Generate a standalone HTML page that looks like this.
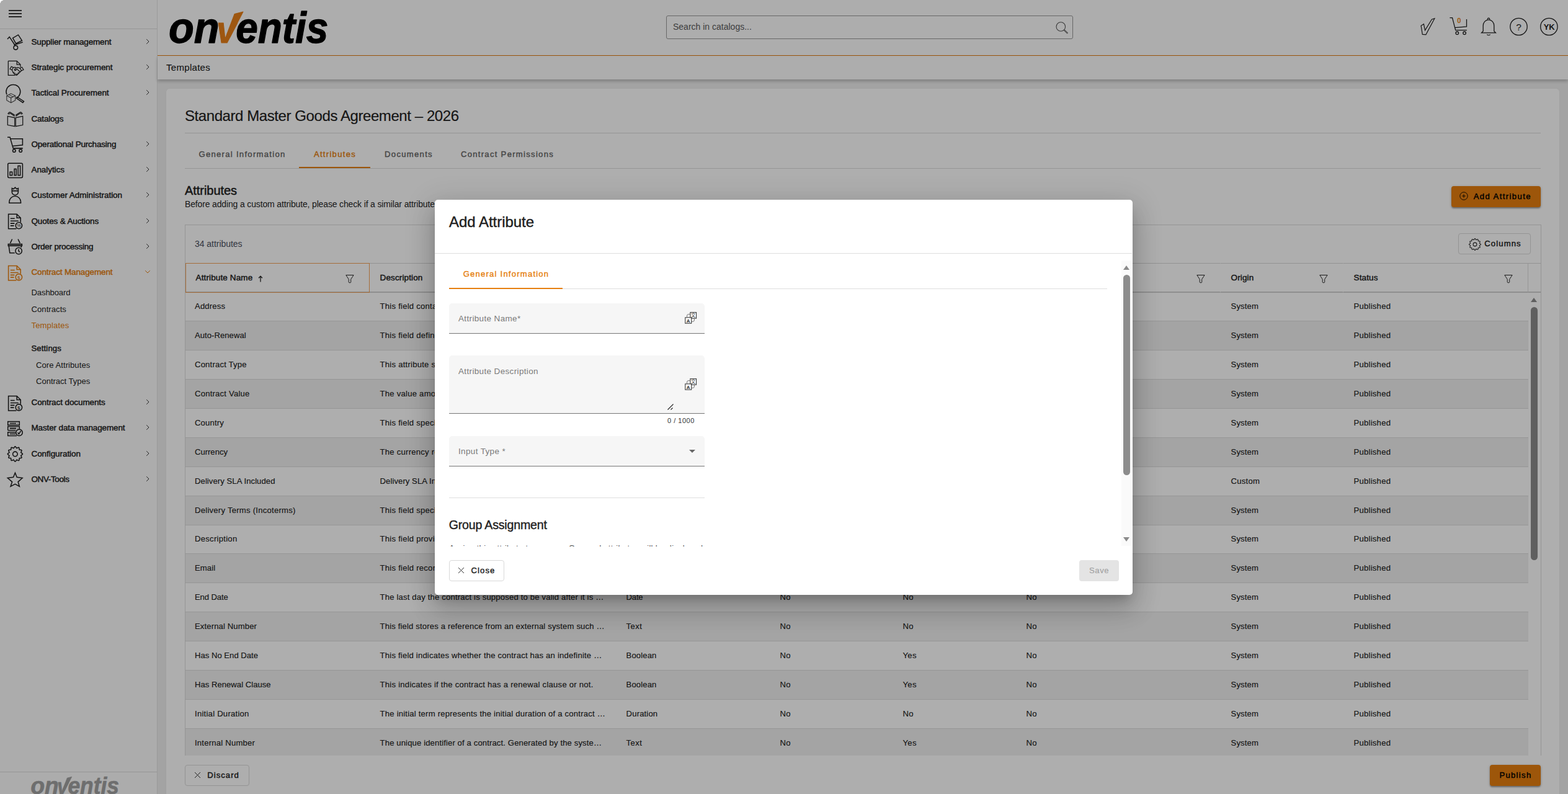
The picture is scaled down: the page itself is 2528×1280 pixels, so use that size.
<!DOCTYPE html><html lang="en"><head><meta charset="utf-8"><title>Templates</title><style>
*{box-sizing:border-box;margin:0;padding:0}
html,body{width:2528px;height:1280px;overflow:hidden}
body{font-family:"Liberation Sans",sans-serif;background:#efefef;color:#212121;position:relative;font-size:14px}
.abs{position:absolute}
.sb{position:absolute;left:0;top:0;width:254px;height:1280px;background:#fdfdfd;border-right:1px solid #e2e2e2}
.sb .top{position:absolute;left:0;top:0;width:253px;height:47px;border-bottom:1px solid #dcdcdc}
.sb .ham{position:absolute;left:14px;top:15.8px;width:21px;height:13px}
.sb .ham i{position:absolute;left:0;width:21px;height:1.8px;background:#3a3a3a}
.mi{position:absolute;left:0;width:253px;height:40px}
.mi .ic{position:absolute;left:0;top:0;width:50px;height:40px;overflow:visible}
.mi .lb{position:absolute;left:50.5px;top:1px;line-height:40px;font-size:13.5px;font-weight:400;-webkit-text-stroke:0.45px currentColor;letter-spacing:-0.15px;color:#222;white-space:nowrap}
.mi .ch{position:absolute;left:234px;top:15px;width:8px;height:10px}
.mi.act .lb{color:#e67f10}
.si{position:absolute;left:50.5px;font-size:13.125px;color:#222;white-space:nowrap;line-height:16px;letter-spacing:-0.12px}
.si.act{color:#e67f10}
.si.h{-webkit-text-stroke:0.45px currentColor;letter-spacing:-0.02px}
.sb .foot{position:absolute;left:0;top:1244px;width:253px;height:36px;border-top:1px solid #dcdcdc;overflow:hidden}
.hd{position:absolute;left:254px;top:0;width:2274px;height:90px;background:#fefefe;border-bottom:1.4px solid #e67f10}
.search{position:absolute;left:820px;top:25.4px;width:656px;height:37.4px;border:1px solid #979797;border-radius:3px}
.search span{position:absolute;left:10px;top:0;line-height:35px;font-size:14px;color:#5a5a5a;white-space:nowrap}
.bc{position:absolute;left:254px;top:90px;width:2274px;height:38px;background:#fefefe;box-shadow:0 3px 5px rgba(0,0,0,.22)}
.bc span{position:absolute;left:14px;top:0;line-height:37px;font-size:15px;color:#212121;letter-spacing:0.3px;-webkit-text-stroke:0.15px currentColor}
.card{position:absolute;left:268px;top:143px;width:2246px;height:1200px;background:#fff;border-radius:5px;box-shadow:0 0 1px rgba(0,0,0,.12)}
.ttl{position:absolute;left:30px;top:28px;font-size:24px;line-height:32px;white-space:nowrap;color:#1f1f1f;letter-spacing:-0.42px;-webkit-text-stroke:0.2px currentColor}
.hr{position:absolute;height:1px;background:#dadada}
.tab{position:absolute;top:81px;height:47px;line-height:50px;font-size:13.125px;font-weight:400;-webkit-text-stroke:0.4px currentColor;letter-spacing:1.28px;color:#666;white-space:nowrap;text-align:center;padding-left:1px}
.tab.on{color:#e67f10;border-bottom:2px solid #e67f10}
.h2{position:absolute;left:30px;top:152px;font-size:20px;line-height:24px;font-weight:400;-webkit-text-stroke:0.5px currentColor;color:#222;white-space:nowrap;letter-spacing:-0.05px}
.sub{position:absolute;left:30px;top:177px;font-size:14px;line-height:18px;color:#262626;white-space:nowrap;letter-spacing:-0.15px}
.btn{position:absolute;height:34px;border-radius:4px;font-size:13.125px;font-weight:400;-webkit-text-stroke:0.42px currentColor;white-space:nowrap;line-height:32px}
.btn.pri{background:#e67f10;color:#000;box-shadow:0 2px 2px rgba(0,0,0,.28),0 1px 4px rgba(0,0,0,.2)}
.btn.out{border:1px solid #d9d9d9;color:#1c1c1c;background:transparent}
.tbl{position:absolute;left:30px;top:219px;width:2186.5px;height:860px;border:1px solid #dadada;border-bottom:none}
.cnt{position:absolute;left:15px;top:20.5px;font-size:14px;color:#4a4f5e;line-height:18px;white-space:nowrap;letter-spacing:-0.04px}
.th{position:absolute;top:61px;height:48px;border-top:1px solid #d6d6d6;border-bottom:2px solid #d0d0d0;border-right:1px solid transparent}
.th b{position:absolute;left:16.5px;top:0px;line-height:46px;font-size:13.5px;font-weight:400;-webkit-text-stroke:0.45px currentColor;color:#222;white-space:nowrap;letter-spacing:0.13px}
.th svg.f{position:absolute;right:24.5px;top:18px;width:14px;height:14px}
.th.foc{outline:1.5px solid #f2a055;outline-offset:-1.5px}
.row{position:absolute;left:0;width:2165px;height:47px;border-bottom:1px solid #dcdcdc}
.row.odd{background:#f1f1f1}
.row span{position:absolute;top:0;line-height:45.6px;-webkit-text-stroke:0.15px currentColor;font-size:13.125px;color:#222;white-space:nowrap;letter-spacing:0.23px}
.scrim{position:absolute;left:0;top:0;width:2528px;height:1280px;background:rgba(0,0,0,.318)}
.modal{position:absolute;left:701px;top:322px;width:1125px;height:637px;background:#fff;border-radius:5px;box-shadow:0 11px 15px -7px rgba(0,0,0,.2),0 24px 38px 3px rgba(0,0,0,.14),0 9px 46px 8px rgba(0,0,0,.12)}
.mt{position:absolute;left:23px;top:20px;font-size:24px;line-height:32px;font-weight:400;-webkit-text-stroke:0.45px currentColor;color:#222;white-space:nowrap;letter-spacing:-0.03px}
.fld{position:absolute;left:23px;width:412px;background:#f6f6f6;border-radius:5px 5px 0 0;border-bottom:1.4px solid #767676}
.fld .l{position:absolute;left:15px;font-size:13.5px;color:#7a7a7a;white-space:nowrap;letter-spacing:0.35px}
</style></head><body><aside class="sb"><div class="top"><div class="ham"><i style="top:0"></i><i style="top:5.2px"></i><i style="top:10.4px"></i></div></div>
<div class="mi" style="top:47px"><svg class="ic" viewBox="0 -20 50 40" fill="none" stroke="#1c1c1c" color="#1c1c1c" stroke-width="1.55" stroke-linecap="butt" stroke-linejoin="miter"><path d="M12,-4.1 L15.2,-7.6 L24.4,6.3"/><path d="M22.6,5.5 L36.7,0.9"/><circle cx="25.3" cy="9.8" r="3.3"/><path d="M20.6,-5.7 L29.4,-10.8 L35.4,-1.6 L25.6,3.2 Z"/></svg><span class="lb" style="letter-spacing:-0.17px">Supplier management</span><svg class="ch" viewBox="0 0 8 10"><path d="M2.2 1.2 L6 5 L2.2 8.8" fill="none" stroke="#3a3a3a" stroke-width="1"/></svg></div>
<div class="mi" style="top:88px"><svg class="ic" viewBox="0 -20 50 40" fill="none" stroke="#1c1c1c" color="#1c1c1c" stroke-width="1.55" stroke-linecap="butt" stroke-linejoin="miter"><g stroke-width="1.25"><path d="M13.3,-9.7 H27.2 L32.9,-4 V0"/><path d="M27.2,-9.7 V-4 H32.9"/><path d="M13.3,-9.7 V13.4 H24"/><path d="M16,3.2 L18.3,-0.6 L21.5,0.8 L19.2,4.8 Z"/><path d="M37.9,4.4 L35.4,0.2 L32.2,1.8 L34.6,6 Z"/><path d="M21.2,1 L24,0.4 L26.5,1.6 L29,0.6 L32.4,2.2"/><path d="M19.4,4.8 L21,9 L24.5,12.6 L27,13.2 L34.4,6"/><path d="M25.2,2 L23.2,4.6 L24.6,5.6 L27.3,3.4 L32.6,8"/><path d="M21.5,9.6 L23,8 M23.2,11.4 L24.8,9.8 M25,12.8 L26.6,11.2 M28.4,11.8 L27.2,10.6 M30.4,10 L29,8.6"/></g></svg><span class="lb" style="letter-spacing:-0.09px">Strategic procurement</span><svg class="ch" viewBox="0 0 8 10"><path d="M2.2 1.2 L6 5 L2.2 8.8" fill="none" stroke="#3a3a3a" stroke-width="1"/></svg></div>
<div class="mi" style="top:129px"><svg class="ic" viewBox="0 -20 50 40" fill="none" stroke="#1c1c1c" color="#1c1c1c" stroke-width="1.55" stroke-linecap="butt" stroke-linejoin="miter"><path d="M10.9,3.4 A11.4,11.4 0 1 1 26.8,8.9"/><path d="M26.2,9.2 L27.8,7.4 L38.4,14.4 L36.8,16.4 Z"/><g stroke-width="1.05" opacity=".85"><path d="M17.7,1.9 L24.7,5.3 V12.6 L17.7,16.7 L10.8,12.6 V5.3 Z"/><path d="M10.8,5.3 L17.7,8.8 L24.7,5.3 M17.7,8.8 V16.7 M14.2,3.6 L21.2,7.1"/></g></svg><span class="lb" style="letter-spacing:-0.05px">Tactical Procurement</span><svg class="ch" viewBox="0 0 8 10"><path d="M2.2 1.2 L6 5 L2.2 8.8" fill="none" stroke="#3a3a3a" stroke-width="1"/></svg></div>
<div class="mi" style="top:171px"><svg class="ic" viewBox="0 -20 50 40" fill="none" stroke="#1c1c1c" color="#1c1c1c" stroke-width="1.55" stroke-linecap="butt" stroke-linejoin="miter"><g stroke-width="1.25"><path d="M12.3,-3.7 L23.7,-1.2 V12.7 L12.3,10.5 Z"/><path d="M36.7,-3.7 L25.3,-1.2 V12.7 L36.7,10.5 Z"/><path d="M12.8,-7 Q14,-10.6 16.2,-10.2 L23.7,-5.4"/><path d="M14.2,-6.6 Q15.4,-8.8 16.8,-8.2 L23.7,-3.4"/><path d="M36.2,-7 Q35,-10.6 32.8,-10.2 L25.3,-5.4"/><path d="M34.8,-6.6 Q33.6,-8.8 32.2,-8.2 L25.3,-3.4"/></g></svg><span class="lb" style="letter-spacing:-0.2px">Catalogs</span></div>
<div class="mi" style="top:212px"><svg class="ic" viewBox="0 -20 50 40" fill="none" stroke="#1c1c1c" color="#1c1c1c" stroke-width="1.55" stroke-linecap="butt" stroke-linejoin="miter"><path d="M12,-10.8 H16.1 L21.2,6.9 H36.7" /><path d="M21.4,7.4 H36.7" stroke-width="1.6" opacity=".6"/><path d="M17.1,-8.3 H36.4 V1.8 L20.3,3.4"/><circle cx="22.8" cy="11" r="2.3"/><circle cx="33.2" cy="11" r="2.3"/></svg><span class="lb" style="letter-spacing:-0.2px">Operational Purchasing</span><svg class="ch" viewBox="0 0 8 10"><path d="M2.2 1.2 L6 5 L2.2 8.8" fill="none" stroke="#3a3a3a" stroke-width="1"/></svg></div>
<div class="mi" style="top:253px"><svg class="ic" viewBox="0 -20 50 40" fill="none" stroke="#1c1c1c" color="#1c1c1c" stroke-width="1.55" stroke-linecap="butt" stroke-linejoin="miter"><rect x="12.7" y="-9.7" width="23.7" height="23.1" rx="1.8"/><rect x="16.1" y="4.2" width="3.5" height="5.4"/><rect x="23.1" y="-0.6" width="3" height="10.2"/><rect x="29.1" y="-5.6" width="3.5" height="15.2"/></svg><span class="lb" style="letter-spacing:-0.07px">Analytics</span><svg class="ch" viewBox="0 0 8 10"><path d="M2.2 1.2 L6 5 L2.2 8.8" fill="none" stroke="#3a3a3a" stroke-width="1"/></svg></div>
<div class="mi" style="top:294px"><svg class="ic" viewBox="0 -20 50 40" fill="none" stroke="#1c1c1c" color="#1c1c1c" stroke-width="1.55" stroke-linecap="butt" stroke-linejoin="miter"><path d="M19.3,-4.5 V-10.4 L21.8,-9.2 L24.4,-11.8 L27,-9.2 L29.4,-10.4 V-4.5 A5.05,5.05 0 0 1 19.3,-4.5 Z"/><path d="M19.3,-6.3 H29.4" stroke-width="1.8"/><path d="M14.9,13.2 V11.5 A9.3,9.3 0 0 1 33.5,11.5 V13.2 Z"/></svg><span class="lb" style="letter-spacing:-0.02px">Customer Administration</span><svg class="ch" viewBox="0 0 8 10"><path d="M2.2 1.2 L6 5 L2.2 8.8" fill="none" stroke="#3a3a3a" stroke-width="1"/></svg></div>
<div class="mi" style="top:336px"><svg class="ic" viewBox="0 -20 50 40" fill="none" stroke="#1c1c1c" color="#1c1c1c" stroke-width="1.55" stroke-linecap="butt" stroke-linejoin="miter"><path d="M33.2,2.2 V-4.7 L27.2,-10.7 H13.6 V12.7 H26.4"/><path d="M27.2,-10.7 V-4.7 H33.2"/><path d="M16.8,-3.8 H23.7 M16.8,0.3 H29.7"/><path d="M16.8,4.1 H23.4 M16.8,7.9 H22.5" stroke-width="1.7"/><circle cx="30.4" cy="7.6" r="5.2"/><text x="30.4" y="10.2" font-size="7.5" text-anchor="middle" stroke="none" fill="currentColor" font-family="Liberation Sans, sans-serif">%</text></svg><span class="lb" style="letter-spacing:-0.15px">Quotes &amp; Auctions</span><svg class="ch" viewBox="0 0 8 10"><path d="M2.2 1.2 L6 5 L2.2 8.8" fill="none" stroke="#3a3a3a" stroke-width="1"/></svg></div>
<div class="mi" style="top:377px"><svg class="ic" viewBox="0 -20 50 40" fill="none" stroke="#1c1c1c" color="#1c1c1c" stroke-width="1.55" stroke-linecap="butt" stroke-linejoin="miter"><path d="M19.6,-11.5 L16.5,-4.8 M29.1,-11.5 L32.3,-4.8"/><rect x="13.3" y="-3.5" width="22.1" height="2.8" fill="#9a9a9a"/><path d="M14.2,-0.7 L15.8,10.7 H23.7 M34.5,-0.7 L34.1,2"/><circle cx="30.1" cy="7.5" r="5.2"/><path d="M30.1,4.8 V7.8 L32,9.5"/></svg><span class="lb" style="letter-spacing:-0.23px">Order processing</span><svg class="ch" viewBox="0 0 8 10"><path d="M2.2 1.2 L6 5 L2.2 8.8" fill="none" stroke="#3a3a3a" stroke-width="1"/></svg></div>
<div class="mi act" style="top:418px"><svg class="ic" viewBox="0 -20 50 40" fill="none" stroke="#e67f10" color="#e67f10" stroke-width="1.55" stroke-linecap="butt" stroke-linejoin="miter"><g transform="translate(0,1.2)"><path d="M33.2,2.2 V-4.7 L27.2,-10.7 H13.6 V12.7 H26.4"/><path d="M27.2,-10.7 V-4.7 H33.2"/><path d="M16.8,-3.8 H23.7 M16.8,0.3 H29.7"/><path d="M16.8,4.1 H23.4 M16.8,7.9 H22.5" stroke-width="1.7"/><circle cx="30.4" cy="7.6" r="5.2"/><text x="30.4" y="10.4" font-size="7.5" font-weight="700" text-anchor="middle" stroke="none" fill="currentColor" font-family="Liberation Sans, sans-serif">§</text></g></svg><span class="lb" style="letter-spacing:-0.14px">Contract Management</span><svg class="ch" viewBox="0 0 10 8" style="width:10px;height:8px;left:233px;top:16px"><path d="M1.2 2.2 L5 6 L8.8 2.2" fill="none" stroke="#e67f10" stroke-width="1"/></svg></div>
<div class="mi" style="top:628px"><svg class="ic" viewBox="0 -20 50 40" fill="none" stroke="#1c1c1c" color="#1c1c1c" stroke-width="1.55" stroke-linecap="butt" stroke-linejoin="miter"><g transform="translate(0,1.2)"><path d="M33.2,2.2 V-4.7 L27.2,-10.7 H13.6 V12.7 H26.4"/><path d="M27.2,-10.7 V-4.7 H33.2"/><path d="M16.8,-3.8 H23.7 M16.8,0.3 H29.7"/><path d="M16.8,4.1 H23.4 M16.8,7.9 H22.5" stroke-width="1.7"/><circle cx="30.4" cy="7.6" r="5.2"/><text x="30.4" y="10.4" font-size="7.5" font-weight="700" text-anchor="middle" stroke="none" fill="currentColor" font-family="Liberation Sans, sans-serif">§</text></g></svg><span class="lb" style="letter-spacing:-0.09px">Contract documents</span><svg class="ch" viewBox="0 0 8 10"><path d="M2.2 1.2 L6 5 L2.2 8.8" fill="none" stroke="#3a3a3a" stroke-width="1"/></svg></div>
<div class="mi" style="top:669px"><svg class="ic" viewBox="0 -20 50 40" fill="none" stroke="#1c1c1c" color="#1c1c1c" stroke-width="1.55" stroke-linecap="butt" stroke-linejoin="miter"><rect x="12.7" y="-9.4" width="18.6" height="5.7"/><path d="M12.7,4.8 V-1.5 H31.3 V2.6 M12.7,4.8 H25.4"/><path d="M25.4,7.7 H12.7 V13.4 H27"/><path d="M15.8,-6.5 H26 M15.8,10.5 H25"/><path d="M15.8,1.6 H26" stroke-width="1.9"/><path d="M28,-6.5 h.6 M28,1.6 h.6" stroke-width="1.4"/><circle cx="31" cy="8.3" r="5.2"/><path d="M28.6,8.2 L30.4,10.6 L33.6,5.8"/></svg><span class="lb" style="letter-spacing:-0.13px">Master data management</span><svg class="ch" viewBox="0 0 8 10"><path d="M2.2 1.2 L6 5 L2.2 8.8" fill="none" stroke="#3a3a3a" stroke-width="1"/></svg></div>
<div class="mi" style="top:711px"><svg class="ic" viewBox="0 -20 50 40" fill="none" stroke="#1c1c1c" color="#1c1c1c" stroke-width="1.55" stroke-linecap="butt" stroke-linejoin="miter"><path d="M24.4,-11.2 L24.9,-11.0 L25.4,-10.5 L25.8,-9.9 L26.2,-9.3 L26.5,-8.8 L26.9,-8.5 L27.4,-8.5 L27.9,-8.8 L28.6,-9.2 L29.2,-9.5 L29.9,-9.7 L30.4,-9.5 L30.8,-9.1 L31.0,-8.5 L31.0,-7.7 L31.0,-7.0 L31.1,-6.4 L31.3,-6.0 L31.7,-5.8 L32.3,-5.7 L33.0,-5.7 L33.8,-5.7 L34.4,-5.5 L34.8,-5.1 L35.0,-4.6 L34.8,-3.9 L34.5,-3.3 L34.1,-2.6 L33.8,-2.1 L33.8,-1.6 L34.1,-1.2 L34.6,-0.9 L35.2,-0.5 L35.8,-0.1 L36.3,0.4 L36.5,0.9 L36.3,1.4 L35.8,1.9 L35.2,2.3 L34.6,2.7 L34.1,3.0 L33.8,3.4 L33.8,3.9 L34.1,4.4 L34.5,5.1 L34.8,5.7 L35.0,6.4 L34.8,6.9 L34.4,7.3 L33.8,7.5 L33.0,7.5 L32.3,7.5 L31.7,7.6 L31.3,7.8 L31.1,8.2 L31.0,8.8 L31.0,9.5 L31.0,10.3 L30.8,10.9 L30.4,11.3 L29.9,11.5 L29.2,11.3 L28.6,11.0 L27.9,10.6 L27.4,10.3 L26.9,10.3 L26.5,10.6 L26.2,11.1 L25.8,11.7 L25.4,12.3 L24.9,12.8 L24.4,13.0 L23.9,12.8 L23.4,12.3 L23.0,11.7 L22.6,11.1 L22.3,10.6 L21.9,10.3 L21.4,10.3 L20.9,10.6 L20.2,11.0 L19.6,11.3 L18.9,11.5 L18.4,11.3 L18.0,10.9 L17.8,10.3 L17.8,9.5 L17.8,8.8 L17.7,8.2 L17.5,7.8 L17.1,7.6 L16.5,7.5 L15.8,7.5 L15.0,7.5 L14.4,7.3 L14.0,6.9 L13.8,6.4 L14.0,5.7 L14.3,5.1 L14.7,4.4 L15.0,3.9 L15.0,3.4 L14.7,3.0 L14.2,2.7 L13.6,2.3 L13.0,1.9 L12.5,1.4 L12.3,0.9 L12.5,0.4 L13.0,-0.1 L13.6,-0.5 L14.2,-0.9 L14.7,-1.2 L15.0,-1.6 L15.0,-2.1 L14.7,-2.6 L14.3,-3.3 L14.0,-3.9 L13.8,-4.6 L14.0,-5.1 L14.4,-5.5 L15.0,-5.7 L15.8,-5.7 L16.5,-5.7 L17.1,-5.8 L17.5,-6.0 L17.7,-6.4 L17.8,-7.0 L17.8,-7.7 L17.8,-8.5 L18.0,-9.1 L18.4,-9.5 L18.9,-9.7 L19.6,-9.5 L20.2,-9.2 L20.9,-8.8 L21.4,-8.5 L21.9,-8.5 L22.3,-8.8 L22.6,-9.3 L23.0,-9.9 L23.4,-10.5 L23.9,-11.0 Z"/><circle cx="24.4" cy="0.9" r="3.8"/></svg><span class="lb" style="letter-spacing:-0.07px">Configuration</span><svg class="ch" viewBox="0 0 8 10"><path d="M2.2 1.2 L6 5 L2.2 8.8" fill="none" stroke="#3a3a3a" stroke-width="1"/></svg></div>
<div class="mi" style="top:752px"><svg class="ic" viewBox="0 -20 50 40" fill="none" stroke="#1c1c1c" color="#1c1c1c" stroke-width="1.55" stroke-linecap="butt" stroke-linejoin="miter"><path d="M24.4,-9.7 L27.2,-2.8 L36.1,-1.5 L29.1,4.8 L31.3,12.1 L24.4,8.3 L17.1,12.1 L19.6,4.8 L12.3,-1.5 L21.5,-2.8 Z"/></svg><span class="lb" style="letter-spacing:-0.39px">ONV-Tools</span><svg class="ch" viewBox="0 0 8 10"><path d="M2.2 1.2 L6 5 L2.2 8.8" fill="none" stroke="#3a3a3a" stroke-width="1"/></svg></div>
<div class="si " style="top:464px;left:50.5px;letter-spacing:-0.14px">Dashboard</div>
<div class="si " style="top:491px;left:50.5px;letter-spacing:0.04px">Contracts</div>
<div class="si act" style="top:517px;left:50.5px;letter-spacing:0.12px">Templates</div>
<div class="si h" style="top:554px;left:50.5px;letter-spacing:0.13px">Settings</div>
<div class="si " style="top:581px;left:58px;letter-spacing:0.04px">Core Attributes</div>
<div class="si " style="top:607px;left:58px;letter-spacing:-0.05px">Contract Types</div>
<div class="foot"><svg class="abs" style="left:45.4px;top:0px;width:155.12px;height:42.104000000000006px;overflow:visible" viewBox="264 6 280 76"><g font-family="Liberation Sans, sans-serif" font-weight="700" font-style="italic" font-size="70" fill="#a2a2a2" stroke="#a2a2a2" stroke-width="1.3" stroke-linejoin="round"><text x="272" y="69.1" textLength="81.5" lengthAdjust="spacingAndGlyphs">on</text><text x="380.3" y="69.1" textLength="149" lengthAdjust="spacingAndGlyphs">entis</text></g><g fill="#a2a2a2" stroke="#a2a2a2" stroke-width="1.2" stroke-linejoin="round"><text x="349.3" y="69.1" font-family="Liberation Sans, sans-serif" font-weight="700" font-style="italic" font-size="62" textLength="31" lengthAdjust="spacingAndGlyphs">v</text><polygon points="365.5,56 378.1,22.6 391.9,19 371,59.5"/></g></svg></div></aside>
<header class="hd">
<svg class="abs" style="left:10px;top:6px;width:280px;height:76px;overflow:visible" viewBox="264 6 280 76"><g font-family="Liberation Sans, sans-serif" font-weight="700" font-style="italic" font-size="70" fill="#000" stroke="#000" stroke-width="1.3" stroke-linejoin="round"><text x="272" y="69.1" textLength="81.5" lengthAdjust="spacingAndGlyphs">on</text><text x="380.3" y="69.1" textLength="149" lengthAdjust="spacingAndGlyphs">entis</text></g><g fill="#e8801a" stroke="#e8801a" stroke-width="1.2" stroke-linejoin="round"><text x="349.3" y="69.1" font-family="Liberation Sans, sans-serif" font-weight="700" font-style="italic" font-size="62" textLength="31" lengthAdjust="spacingAndGlyphs">v</text><polygon points="365.5,56 378.1,22.6 391.9,19 371,59.5"/></g></svg>
<div class="search"><span>Search in catalogs...</span><svg class="abs" style="right:5px;top:7.2px;width:22px;height:22px" viewBox="0 0 22 22" fill="none" stroke="#555" stroke-width="1.1"><circle cx="8.3" cy="9" r="7.3"/><path d="M13.6 14.2 L19.3 19.7" stroke-width="2.2"/><path d="M14.2 14.8 L18.9 19.3" stroke="#ddd" stroke-width="0.7"/></svg></div>
<svg class="abs" style="left:2014px;top:8px;width:260px;height:70px" viewBox="2268 8 260 70" fill="none" stroke="#1e1e1e" stroke-width="1.3" stroke-linejoin="miter"><path d="M2291.1,41.6 L2295.4,38.8 L2297.5,48.8 L2308.4,31.2 L2312.9,29.8 L2298.9,55.9 L2293.3,55.4 Z" stroke-width="1.2"/><path d="M2337.4,28.6 H2341.5 L2346.7,48.6 H2364.9"/><path d="M2364.5,31.1 V43 L2345.4,44.6"/><circle cx="2349.3" cy="53.3" r="2.3"/><circle cx="2361.1" cy="53.3" r="2.3"/><text x="2352.4" y="37" font-family="Liberation Sans, sans-serif" font-size="10" text-anchor="middle" fill="#e67f10" stroke="#e67f10" stroke-width="0.5">0</text><path d="M2398.4,31.4 a1.7,1.7 0 1 1 3.2,0 M2391.2,50.2 V41.4 a8.8,9.6 0 0 1 17.6,0 V50.2 L2411.4,52.8 H2388.6 Z" /><path d="M2397.4,55.4 a2.8,2.2 0 0 0 5.2,0" stroke-width="1.1"/><circle cx="2448.5" cy="43" r="13.7"/><text x="2448.5" y="48.5" font-family="Liberation Sans, sans-serif" font-size="15.5" text-anchor="middle" fill="#1e1e1e" stroke="none">?</text><circle cx="2497.4" cy="43" r="13.7"/><text x="2497.5" y="48" font-family="Liberation Sans, sans-serif" font-size="13" font-weight="700" text-anchor="middle" fill="#1e1e1e" stroke="none" letter-spacing="-0.3">YK</text></svg>
</header>
<div class="bc"><span>Templates</span></div>
<main class="card">
<div class="ttl">Standard Master Goods Agreement – 2026</div>
<div class="hr" style="left:30px;top:71px;width:2186px"></div>
<div class="tab" style="left:30px;width:184px">General Information</div>
<div class="tab on" style="left:214px;width:115px">Attributes</div>
<div class="tab" style="left:329px;width:123px">Documents</div>
<div class="tab" style="left:452px;width:195px">Contract Permissions</div>
<div class="hr" style="left:30px;top:128px;width:2186px"></div>
<div class="h2">Attributes</div>
<div class="sub">Before adding a custom attribute, please check if a similar attribute already exists in the list below.</div>
<div class="btn pri" style="left:2072px;top:157px;width:144px"><svg class="abs" style="left:12.5px;top:9.3px;width:14px;height:14px" viewBox="0 0 14 14" fill="none" stroke="#000" stroke-width="0.9"><circle cx="7" cy="7" r="6.2"/><path d="M7 4.2v5.6M4.2 7h5.6"/></svg><span class="abs" style="left:35.7px;top:0;line-height:33px;letter-spacing:1.4px">Add Attribute</span></div>
<div class="tbl">
<div class="cnt">34 attributes</div>
<div class="btn out" style="left:2052px;top:13px;width:117px"><svg class="abs" style="left:15.3px;top:5.5px;width:22px;height:22px" viewBox="-11 -11 22 22" fill="none" stroke="#2a2a2a" stroke-width="1.1"><path d="M0.0,-9.4 L0.4,-9.3 L0.8,-8.9 L1.1,-8.4 L1.4,-7.9 L1.7,-7.5 L2.0,-7.3 L2.3,-7.4 L2.8,-7.6 L3.3,-7.9 L3.8,-8.1 L4.3,-8.2 L4.7,-8.1 L5.0,-7.8 L5.1,-7.3 L5.2,-6.7 L5.2,-6.2 L5.2,-5.7 L5.4,-5.4 L5.7,-5.2 L6.2,-5.2 L6.7,-5.2 L7.3,-5.1 L7.8,-5.0 L8.1,-4.7 L8.2,-4.3 L8.1,-3.8 L7.9,-3.3 L7.6,-2.8 L7.4,-2.3 L7.3,-2.0 L7.5,-1.7 L7.9,-1.4 L8.4,-1.1 L8.9,-0.8 L9.3,-0.4 L9.4,-0.0 L9.3,0.4 L8.9,0.8 L8.4,1.1 L7.9,1.4 L7.5,1.7 L7.3,2.0 L7.4,2.3 L7.6,2.8 L7.9,3.3 L8.1,3.8 L8.2,4.3 L8.1,4.7 L7.8,5.0 L7.3,5.1 L6.7,5.2 L6.2,5.2 L5.7,5.2 L5.4,5.4 L5.2,5.7 L5.2,6.2 L5.2,6.7 L5.1,7.3 L5.0,7.8 L4.7,8.1 L4.3,8.2 L3.8,8.1 L3.3,7.9 L2.8,7.6 L2.3,7.4 L2.0,7.3 L1.7,7.5 L1.4,7.9 L1.1,8.4 L0.8,8.9 L0.4,9.3 L0.0,9.4 L-0.4,9.3 L-0.8,8.9 L-1.1,8.4 L-1.4,7.9 L-1.7,7.5 L-2.0,7.3 L-2.3,7.4 L-2.8,7.6 L-3.3,7.9 L-3.8,8.1 L-4.3,8.2 L-4.7,8.1 L-5.0,7.8 L-5.1,7.3 L-5.2,6.7 L-5.2,6.2 L-5.2,5.7 L-5.4,5.4 L-5.7,5.2 L-6.2,5.2 L-6.7,5.2 L-7.3,5.1 L-7.8,5.0 L-8.1,4.7 L-8.2,4.3 L-8.1,3.8 L-7.9,3.3 L-7.6,2.8 L-7.4,2.3 L-7.3,2.0 L-7.5,1.7 L-7.9,1.4 L-8.4,1.1 L-8.9,0.8 L-9.3,0.4 L-9.4,0.0 L-9.3,-0.4 L-8.9,-0.8 L-8.4,-1.1 L-7.9,-1.4 L-7.5,-1.7 L-7.3,-2.0 L-7.4,-2.3 L-7.6,-2.8 L-7.9,-3.3 L-8.1,-3.8 L-8.2,-4.3 L-8.1,-4.7 L-7.8,-5.0 L-7.3,-5.1 L-6.7,-5.2 L-6.2,-5.2 L-5.7,-5.2 L-5.4,-5.4 L-5.2,-5.7 L-5.2,-6.2 L-5.2,-6.7 L-5.1,-7.3 L-5.0,-7.8 L-4.7,-8.1 L-4.3,-8.2 L-3.8,-8.1 L-3.3,-7.9 L-2.8,-7.6 L-2.3,-7.4 L-2.0,-7.3 L-1.7,-7.5 L-1.4,-7.9 L-1.1,-8.4 L-0.8,-8.9 L-0.4,-9.3 Z"/><circle cx="0" cy="0" r="2.9"/></svg><span class="abs" style="left:41.2px;top:0;line-height:32px;letter-spacing:1.12px">Columns</span></div>
<div class="th foc" style="left:0px;width:297px"><b>Attribute Name</b><svg style="position:absolute;left:116.5px;top:19px;width:8px;height:11px" viewBox="0 0 8 11" fill="none" stroke="#222" stroke-width="1.3"><path d="M4 10.5V1.2M1 4.2L4 1.2L7 4.2"/></svg><svg class="f" viewBox="0 0 14 14" fill="none" stroke="#2a2a2a" stroke-width="1"><path d="M0.8,0.5 H13.1 L8.7,7.2 V11.7 Q8.7,12.8 7,12.8 Q5.2,12.8 5.2,11.7 V7.2 Z"/></svg></div>
<div class="th" style="left:297px;width:397px"><b>Description</b><svg class="f" viewBox="0 0 14 14" fill="none" stroke="#2a2a2a" stroke-width="1"><path d="M0.8,0.5 H13.1 L8.7,7.2 V11.7 Q8.7,12.8 7,12.8 Q5.2,12.8 5.2,11.7 V7.2 Z"/></svg></div>
<div class="th" style="left:694px;width:248px"><b>Input Type</b><svg class="f" viewBox="0 0 14 14" fill="none" stroke="#2a2a2a" stroke-width="1"><path d="M0.8,0.5 H13.1 L8.7,7.2 V11.7 Q8.7,12.8 7,12.8 Q5.2,12.8 5.2,11.7 V7.2 Z"/></svg></div>
<div class="th" style="left:942px;width:198px"><b>Mandatory</b><svg class="f" viewBox="0 0 14 14" fill="none" stroke="#2a2a2a" stroke-width="1"><path d="M0.8,0.5 H13.1 L8.7,7.2 V11.7 Q8.7,12.8 7,12.8 Q5.2,12.8 5.2,11.7 V7.2 Z"/></svg></div>
<div class="th" style="left:1140px;width:199px"><b>Show in Overview</b><svg class="f" viewBox="0 0 14 14" fill="none" stroke="#2a2a2a" stroke-width="1"><path d="M0.8,0.5 H13.1 L8.7,7.2 V11.7 Q8.7,12.8 7,12.8 Q5.2,12.8 5.2,11.7 V7.2 Z"/></svg></div>
<div class="th" style="left:1339px;width:330px"><b>Editable in Contract</b><svg class="f" viewBox="0 0 14 14" fill="none" stroke="#2a2a2a" stroke-width="1"><path d="M0.8,0.5 H13.1 L8.7,7.2 V11.7 Q8.7,12.8 7,12.8 Q5.2,12.8 5.2,11.7 V7.2 Z"/></svg></div>
<div class="th" style="left:1669px;width:198px"><b>Origin</b><svg class="f" viewBox="0 0 14 14" fill="none" stroke="#2a2a2a" stroke-width="1"><path d="M0.8,0.5 H13.1 L8.7,7.2 V11.7 Q8.7,12.8 7,12.8 Q5.2,12.8 5.2,11.7 V7.2 Z"/></svg></div>
<div class="th" style="left:1867px;width:298px"><b>Status</b><svg class="f" viewBox="0 0 14 14" fill="none" stroke="#2a2a2a" stroke-width="1"><path d="M0.8,0.5 H13.1 L8.7,7.2 V11.7 Q8.7,12.8 7,12.8 Q5.2,12.8 5.2,11.7 V7.2 Z"/></svg></div>
<div class="th" style="left:2164px;width:21px;border-right:none;border-left:1px solid #dcdcdc"></div>
<div class="row" style="top:108.20px">
<span style="left:15px;letter-spacing:0.16px">Address</span>
<span style="left:313.6px">This field contains the address of the contract partner …</span>
<span style="left:710.6px;letter-spacing:0.16px">Address</span>
<span style="left:958.6px">No</span>
<span style="left:1156.6px">No</span>
<span style="left:1355.6px">No</span>
<span style="left:1685.6px;letter-spacing:0.11px">System</span>
<span style="left:1883.6px;letter-spacing:0.22px">Published</span>
</div>
<div class="row odd" style="top:155.10px">
<span style="left:15px;letter-spacing:0.03px">Auto-Renewal</span>
<span style="left:313.6px">This field defines whether the contract renews automatic…</span>
<span style="left:710.6px;letter-spacing:0.11px">Boolean</span>
<span style="left:958.6px">No</span>
<span style="left:1156.6px">No</span>
<span style="left:1355.6px">No</span>
<span style="left:1685.6px;letter-spacing:0.11px">System</span>
<span style="left:1883.6px;letter-spacing:0.22px">Published</span>
</div>
<div class="row" style="top:202.00px">
<span style="left:15px;letter-spacing:0.18px">Contract Type</span>
<span style="left:313.6px">This attribute specifies the type of the contract and its …</span>
<span style="left:710.6px">Dropdown</span>
<span style="left:958.6px">Yes</span>
<span style="left:1156.6px">Yes</span>
<span style="left:1355.6px">No</span>
<span style="left:1685.6px;letter-spacing:0.11px">System</span>
<span style="left:1883.6px;letter-spacing:0.22px">Published</span>
</div>
<div class="row odd" style="top:248.90px">
<span style="left:15px;letter-spacing:0.2px">Contract Value</span>
<span style="left:313.6px">The value amount of the contract in the selected curren…</span>
<span style="left:710.6px">Number</span>
<span style="left:958.6px">No</span>
<span style="left:1156.6px">Yes</span>
<span style="left:1355.6px">No</span>
<span style="left:1685.6px;letter-spacing:0.11px">System</span>
<span style="left:1883.6px;letter-spacing:0.22px">Published</span>
</div>
<div class="row" style="top:295.80px">
<span style="left:15px;letter-spacing:0.15px">Country</span>
<span style="left:313.6px">This field specifies the country in which the contract is …</span>
<span style="left:710.6px">Dropdown</span>
<span style="left:958.6px">No</span>
<span style="left:1156.6px">No</span>
<span style="left:1355.6px">No</span>
<span style="left:1685.6px;letter-spacing:0.11px">System</span>
<span style="left:1883.6px;letter-spacing:0.22px">Published</span>
</div>
<div class="row odd" style="top:342.70px">
<span style="left:15px;letter-spacing:-0.03px">Currency</span>
<span style="left:313.6px">The currency related to the contract value of the contra…</span>
<span style="left:710.6px">Dropdown</span>
<span style="left:958.6px">No</span>
<span style="left:1156.6px">No</span>
<span style="left:1355.6px">No</span>
<span style="left:1685.6px;letter-spacing:0.11px">System</span>
<span style="left:1883.6px;letter-spacing:0.22px">Published</span>
</div>
<div class="row" style="top:389.60px">
<span style="left:15px;letter-spacing:0.06px">Delivery SLA Included</span>
<span style="left:313.6px;letter-spacing:0.06px">Delivery SLA Included</span>
<span style="left:710.6px;letter-spacing:0.11px">Boolean</span>
<span style="left:958.6px">No</span>
<span style="left:1156.6px">No</span>
<span style="left:1355.6px">Yes</span>
<span style="left:1685.6px;letter-spacing:0.21px">Custom</span>
<span style="left:1883.6px;letter-spacing:0.22px">Published</span>
</div>
<div class="row odd" style="top:436.50px">
<span style="left:15px;letter-spacing:0.24px">Delivery Terms (Incoterms)</span>
<span style="left:313.6px">This field specifies the delivery terms agreed within the …</span>
<span style="left:710.6px">Dropdown</span>
<span style="left:958.6px">No</span>
<span style="left:1156.6px">No</span>
<span style="left:1355.6px">No</span>
<span style="left:1685.6px;letter-spacing:0.11px">System</span>
<span style="left:1883.6px;letter-spacing:0.22px">Published</span>
</div>
<div class="row" style="top:483.40px">
<span style="left:15px;letter-spacing:0.26px">Description</span>
<span style="left:313.6px">This field provides a short description of the contract a…</span>
<span style="left:710.6px;letter-spacing:0.4px">Text</span>
<span style="left:958.6px">No</span>
<span style="left:1156.6px">No</span>
<span style="left:1355.6px">No</span>
<span style="left:1685.6px;letter-spacing:0.11px">System</span>
<span style="left:1883.6px;letter-spacing:0.22px">Published</span>
</div>
<div class="row odd" style="top:530.30px">
<span style="left:15px;letter-spacing:0.08px">Email</span>
<span style="left:313.6px">This field records the email address of the main contact …</span>
<span style="left:710.6px;letter-spacing:0.4px">Text</span>
<span style="left:958.6px">No</span>
<span style="left:1156.6px">No</span>
<span style="left:1355.6px">No</span>
<span style="left:1685.6px;letter-spacing:0.11px">System</span>
<span style="left:1883.6px;letter-spacing:0.22px">Published</span>
</div>
<div class="row" style="top:577.20px">
<span style="left:15px;letter-spacing:-0.14px">End Date</span>
<span style="left:313.6px;letter-spacing:0.165px">The last day the contract is supposed to be valid after it is …</span>
<span style="left:710.6px;letter-spacing:-0.22px">Date</span>
<span style="left:958.6px">No</span>
<span style="left:1156.6px">No</span>
<span style="left:1355.6px">No</span>
<span style="left:1685.6px;letter-spacing:0.11px">System</span>
<span style="left:1883.6px;letter-spacing:0.22px">Published</span>
</div>
<div class="row odd" style="top:624.10px">
<span style="left:15px;letter-spacing:0.11px">External Number</span>
<span style="left:313.6px;letter-spacing:0.146px">This field stores a reference from an external system such …</span>
<span style="left:710.6px;letter-spacing:0.4px">Text</span>
<span style="left:958.6px">No</span>
<span style="left:1156.6px">No</span>
<span style="left:1355.6px">No</span>
<span style="left:1685.6px;letter-spacing:0.11px">System</span>
<span style="left:1883.6px;letter-spacing:0.22px">Published</span>
</div>
<div class="row" style="top:671.00px">
<span style="left:15px;letter-spacing:0.0px">Has No End Date</span>
<span style="left:313.6px;letter-spacing:0.192px">This field indicates whether the contract has an indefinite …</span>
<span style="left:710.6px;letter-spacing:0.11px">Boolean</span>
<span style="left:958.6px">No</span>
<span style="left:1156.6px">Yes</span>
<span style="left:1355.6px">No</span>
<span style="left:1685.6px;letter-spacing:0.11px">System</span>
<span style="left:1883.6px;letter-spacing:0.22px">Published</span>
</div>
<div class="row odd" style="top:717.90px">
<span style="left:15px;letter-spacing:0.01px">Has Renewal Clause</span>
<span style="left:313.6px;letter-spacing:0.236px">This indicates if the contract has a renewal clause or not.</span>
<span style="left:710.6px;letter-spacing:0.11px">Boolean</span>
<span style="left:958.6px">No</span>
<span style="left:1156.6px">Yes</span>
<span style="left:1355.6px">No</span>
<span style="left:1685.6px;letter-spacing:0.11px">System</span>
<span style="left:1883.6px;letter-spacing:0.22px">Published</span>
</div>
<div class="row" style="top:764.80px">
<span style="left:15px;letter-spacing:0.24px">Initial Duration</span>
<span style="left:313.6px;letter-spacing:0.202px">The initial term represents the initial duration of a contract …</span>
<span style="left:710.6px;letter-spacing:0.14px">Duration</span>
<span style="left:958.6px">No</span>
<span style="left:1156.6px">No</span>
<span style="left:1355.6px">No</span>
<span style="left:1685.6px;letter-spacing:0.11px">System</span>
<span style="left:1883.6px;letter-spacing:0.22px">Published</span>
</div>
<div class="row odd" style="top:811.70px">
<span style="left:15px;letter-spacing:0.21px">Internal Number</span>
<span style="left:313.6px;letter-spacing:0.118px">The unique identifier of a contract. Generated by the syste…</span>
<span style="left:710.6px;letter-spacing:0.4px">Text</span>
<span style="left:958.6px">No</span>
<span style="left:1156.6px">Yes</span>
<span style="left:1355.6px">No</span>
<span style="left:1685.6px;letter-spacing:0.11px">System</span>
<span style="left:1883.6px;letter-spacing:0.22px">Published</span>
</div>
<div class="abs" style="left:2165px;top:109px;width:21px;height:760px;background:#fff"></div>
<div class="abs" style="left:2169px;top:132px;width:10.5px;height:408px;border-radius:6px;background:#8b8b8b"></div>
<svg class="abs" style="left:2169px;top:117px;width:10px;height:7px" viewBox="0 0 10 7"><path d="M0 7 L5 0 L10 7Z" fill="#8b8b8b"/></svg>
</div>
<div class="abs" style="left:0;top:1075px;width:2246px;height:80px;background:#fff"></div>
<div class="abs" style="left:2215.5px;top:219px;width:1px;height:856px;background:#dadada"></div>
<div class="btn out" style="left:30px;top:1090px;width:104px"><svg class="abs" style="left:14px;top:10px;width:11px;height:11px" viewBox="0 0 11 11" stroke="#333" stroke-width="1"><path d="M1 1L10 10M10 1L1 10"/></svg><span class="abs" style="left:35.3px;top:0;line-height:32px;letter-spacing:1.02px">Discard</span></div>
<div class="btn pri" style="left:2134px;top:1090px;width:82px"><span class="abs" style="left:15.4px;top:0;line-height:33px;letter-spacing:1.3px">Publish</span></div>
</main>
<div class="scrim"></div>
<div class="abs" style="left:0;top:0;width:5px;height:5px;background:radial-gradient(circle at 5px 5px, rgba(255,255,255,0) 3.6px, #fff 4.8px)"></div>
<div class="modal">
<div class="mt">Add Attribute</div>
<div class="hr" style="left:0;top:86px;width:1124px;background:#dedede"></div>
<div class="abs" style="left:23px;top:96.6px;width:183px;height:47px;line-height:46px;text-align:center;border-bottom:2px solid #e67f10;color:#e67f10;font-weight:400;-webkit-text-stroke:0.4px #e67f10;font-size:13.125px;letter-spacing:1.2px;padding-left:1px">General Information</div>
<div class="hr" style="left:206px;top:142.6px;width:878px;background:#dedede"></div>
<div class="fld" style="top:167px;height:49px"><span class="l" style="top:17px">Attribute Name*</span><svg class="abs" style="left:378px;top:12px;width:22px;height:22px" viewBox="1102 501 22 22" fill="none" stroke="#3a3a3a" stroke-width="1.1"><path d="M1107.6,511.4 V509 Q1107.6,506.6 1110,506.6 H1112.4 M1119.4,513.6 V516 Q1119.4,518.4 1117,518.4 H1115.2" stroke="#777" stroke-width="1"/><rect x="1112.9" y="503.6" width="9.7" height="9.6" fill="#fff"/><rect x="1104.8" y="511.9" width="9.9" height="9.3" fill="#fff"/><text x="1109.75" y="519.8" font-family="Liberation Sans, sans-serif" font-size="8" font-weight="700" text-anchor="middle" fill="#333" stroke="none">A</text><text x="1117.8" y="511.4" font-family="Noto Sans CJK SC, sans-serif" font-size="7.5" text-anchor="middle" fill="#333" stroke="none">文</text></svg></div>
<div class="fld" style="top:251px;height:94px"><span class="l" style="top:18px">Attribute Description</span><svg class="abs" style="left:378px;top:34.7px;width:22px;height:22px" viewBox="1102 501 22 22" fill="none" stroke="#3a3a3a" stroke-width="1.1"><path d="M1107.6,511.4 V509 Q1107.6,506.6 1110,506.6 H1112.4 M1119.4,513.6 V516 Q1119.4,518.4 1117,518.4 H1115.2" stroke="#777" stroke-width="1"/><rect x="1112.9" y="503.6" width="9.7" height="9.6" fill="#fff"/><rect x="1104.8" y="511.9" width="9.9" height="9.3" fill="#fff"/><text x="1109.75" y="519.8" font-family="Liberation Sans, sans-serif" font-size="8" font-weight="700" text-anchor="middle" fill="#333" stroke="none">A</text><text x="1117.8" y="511.4" font-family="Noto Sans CJK SC, sans-serif" font-size="7.5" text-anchor="middle" fill="#333" stroke="none">文</text></svg><svg class="abs" style="left:351px;top:77px;width:12px;height:12px" viewBox="0 0 12 12" fill="none" stroke="#222" stroke-width="1.1"><path d="M1.5 10.5L10.5 1.5M6.5 10.5L9.5 7.5"/></svg></div>
<div class="abs" style="left:375px;top:350px;font-size:11px;color:#333;letter-spacing:0.5px;white-space:nowrap">0 / 1000</div>
<div class="fld" style="top:381px;height:49px"><span class="l" style="top:17px">Input Type *</span><svg class="abs" style="left:387px;top:22px;width:10px;height:5px" viewBox="0 0 10 5"><path d="M0 0H10L5 5Z" fill="#666"/></svg></div>
<div class="hr" style="left:23px;top:480px;width:412px;background:#dedede"></div>
<div class="abs" style="left:22.7px;top:511.5px;font-size:19.6px;font-weight:400;-webkit-text-stroke:0.4px currentColor;color:#222;letter-spacing:-0.2px;white-space:nowrap;line-height:24px">Group Assignment</div>
<div class="abs" style="left:23px;top:550px;width:413px;height:9.2px;overflow:hidden"><div style="font-size:13.125px;line-height:18px;color:#4a4a4a;white-space:nowrap;letter-spacing:0.245px;margin-top:3.2px">Assign this attribute to a group. Grouped attributes will be displayed together in the contract.</div></div>
<div class="abs" style="left:1107px;top:98px;width:17px;height:460px;background:#fafafa"></div>
<div class="abs" style="left:1110px;top:121px;width:10.5px;height:323px;border-radius:6px;background:#8c8c8c"></div>
<svg class="abs" style="left:1110px;top:106px;width:10px;height:7px" viewBox="0 0 10 7"><path d="M0 7 L5 0 L10 7Z" fill="#8b8b8b"/></svg>
<svg class="abs" style="left:1110px;top:544px;width:10px;height:7px" viewBox="0 0 10 7"><path d="M0 0 L5 7 L10 0Z" fill="#8b8b8b"/></svg>
<div class="btn out" style="left:23px;top:581px;width:89px"><svg class="abs" style="left:13px;top:10px;width:11px;height:11px" viewBox="0 0 11 11" stroke="#333" stroke-width="1"><path d="M1 1L10 10M10 1L1 10"/></svg><span class="abs" style="left:34.6px;top:0;line-height:32px;letter-spacing:1.05px">Close</span></div>
<div class="btn" style="left:1039px;top:581px;width:64px;background:#e4e4e4;color:#a0a0a0;-webkit-text-stroke:0.1px #a0a0a0"><span class="abs" style="left:15.9px;top:0;line-height:33px;letter-spacing:0.63px">Save</span></div>
</div></body></html>
